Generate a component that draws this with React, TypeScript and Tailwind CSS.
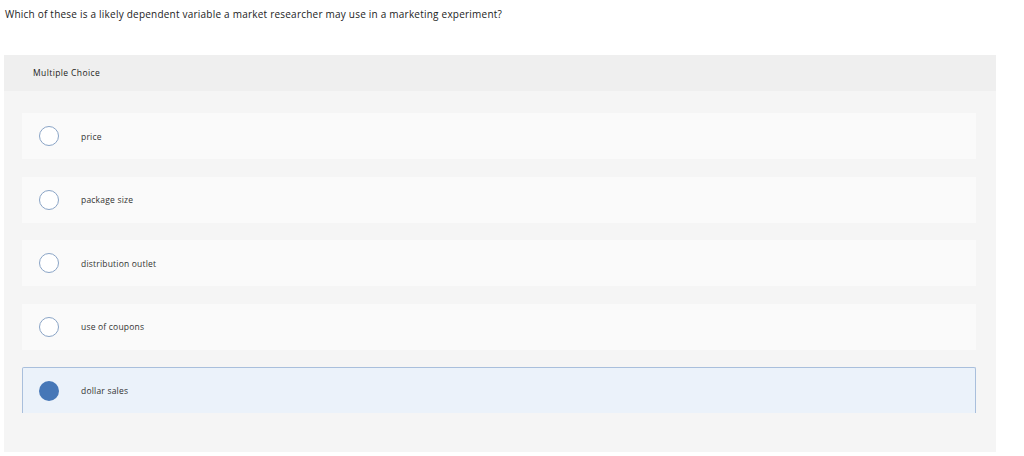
const options = [
  { label: "price", selected: false },
  { label: "package size", selected: false },
  { label: "distribution outlet", selected: false },
  { label: "use of coupons", selected: false },
  { label: "dollar sales", selected: true },
];

function Option({ label, selected }: { label: string; selected: boolean }) {
  return (
    <div
      className={
        selected
          ? "flex h-[46px] items-center rounded-t-[2px] border border-b-0 border-[#a9bfdc] bg-[#ebf2fa]"
          : "flex h-[46px] items-center border border-transparent bg-[#fafafa]"
      }
    >
      {selected ? (
        <span className="ml-[16px] h-[20px] w-[20px] rounded-full bg-[#4677b7]" />
      ) : (
        <span className="ml-[16px] h-[20px] w-[20px] rounded-full border border-[#8aa4c6] bg-white" />
      )}
      <span className="ml-[22px] pt-[2px] text-[8.5px] tracking-[0.2px] text-[#333]">{label}</span>
    </div>
  );
}

export default function App() {
  return (
    <div className="h-[456px] w-[1024px] bg-white font-['Open_Sans',sans-serif] text-[#222]">
      <p className="px-[5px] pt-[7px] text-[10px] leading-[14px] tracking-[0.22px]">
        Which of these is a likely dependent variable a market researcher may use in a marketing experiment?
      </p>
      <div className="ml-[4px] mt-[34px] h-[397px] w-[992px] bg-[#f5f5f5]">
        <div className="flex h-[36px] items-center bg-[#efefef] pl-[29px] text-[8.5px] tracking-[0.4px] text-[#222]">
          Multiple Choice
        </div>
        <div className="flex flex-col gap-[17.5px] pl-[18px] pr-[20px] pt-[22px]">
          {options.map((o) => (
            <Option key={o.label} label={o.label} selected={o.selected} />
          ))}
        </div>
      </div>
    </div>
  );
}
